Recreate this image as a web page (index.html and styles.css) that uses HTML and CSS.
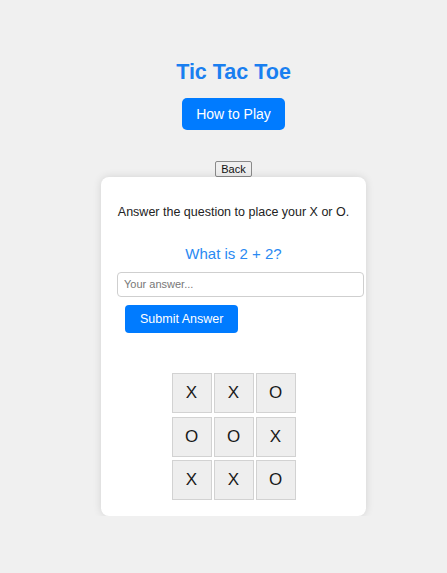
FILE: index.html
```html
<!DOCTYPE html>
<html lang="en">
<head>
<meta charset="utf-8">
<title>Tic Tac Toe</title>
<link rel="stylesheet" href="styles.css">
</head>
<body>
<div class="page">
  <h1 class="title">Tic Tac Toe</h1>
  <button class="btn btn-help">How to Play</button>
  <button class="btn-back">Back</button>
  <div class="card">
    <p class="instructions">Answer the question to place your X or O.</p>
    <p class="question">What is 2 + 2?</p>
    <input class="answer" type="text" placeholder="Your answer...">
    <div class="actions">
      <button class="btn btn-submit">Submit Answer</button>
    </div>
    <div class="board">
      <div class="cell">X</div>
      <div class="cell">X</div>
      <div class="cell">O</div>
      <div class="cell">O</div>
      <div class="cell">O</div>
      <div class="cell">X</div>
      <div class="cell">X</div>
      <div class="cell">X</div>
      <div class="cell">O</div>
    </div>
  </div>
</div>
</body>
</html>
```
FILE: styles.css
```css
html, body {
  margin: 0;
  padding: 0;
}
body {
  background: #f0f0f0;
  font-family: "Liberation Sans", Arial, sans-serif;
  color: #333;
}
.page {
  display: flex;
  flex-direction: column;
  align-items: center;
  padding-left: 20px;
}
.title {
  margin: 60px 0 0;
  font-size: 21.5px;
  line-height: 24px;
  font-weight: bold;
  color: #1a7ff0;
}
.btn {
  background: #007bff;
  color: #fff;
  border: none;
  border-radius: 5px;
  font-family: "Liberation Sans", Arial, sans-serif;
  cursor: pointer;
}
.btn-help {
  margin-top: 14px;
  font-size: 14px;
  line-height: 16px;
  padding: 8px 14px;
}
.btn-back {
  margin-top: 31px;
  font-family: "Liberation Sans", Arial, sans-serif;
  font-size: 11px;
  line-height: 12px;
  padding: 1px 5px;
  background: #efefef;
  color: #111;
  border: 1px solid #8a8a8a;
  border-radius: 2px;
}
.card {
  width: 233px;
  padding: 16px;
  background: #fff;
  border-radius: 8px;
  box-shadow: 0 0 8px rgba(0, 0, 0, 0.12);
  display: flex;
  flex-direction: column;
}
.instructions {
  margin: 12px 0 0;
  font-size: 12.5px;
  line-height: 15px;
  text-align: center;
  color: #222;
}
.question {
  margin: 25px 0 0;
  font-size: 15px;
  line-height: 17px;
  text-align: center;
  color: #2a8af2;
}
.answer {
  margin-top: 10px;
  width: 100%;
  box-sizing: content-box;
  font-family: "Liberation Sans", Arial, sans-serif;
  font-size: 11px;
  line-height: 13px;
  padding: 5px 6px;
  border: 1px solid #cfcfcf;
  border-radius: 4px;
  color: #333;
}
.answer::placeholder {
  color: #777;
}
.actions {
  display: flex;
  padding: 8px;
}
.btn-submit {
  font-size: 12.5px;
  line-height: 14px;
  padding: 7px 15px;
  border-radius: 4px;
}
.board {
  margin-top: 32px;
  align-self: center;
  display: grid;
  grid-template-columns: repeat(3, 40px);
  grid-auto-rows: 40px;
  column-gap: 2px;
  row-gap: 3.5px;
}
.cell {
  box-sizing: border-box;
  background: #eeeeee;
  border: 1px solid #d2d2d2;
  display: flex;
  align-items: center;
  justify-content: center;
  font-size: 17px;
  color: #1a1a1a;
}
```
